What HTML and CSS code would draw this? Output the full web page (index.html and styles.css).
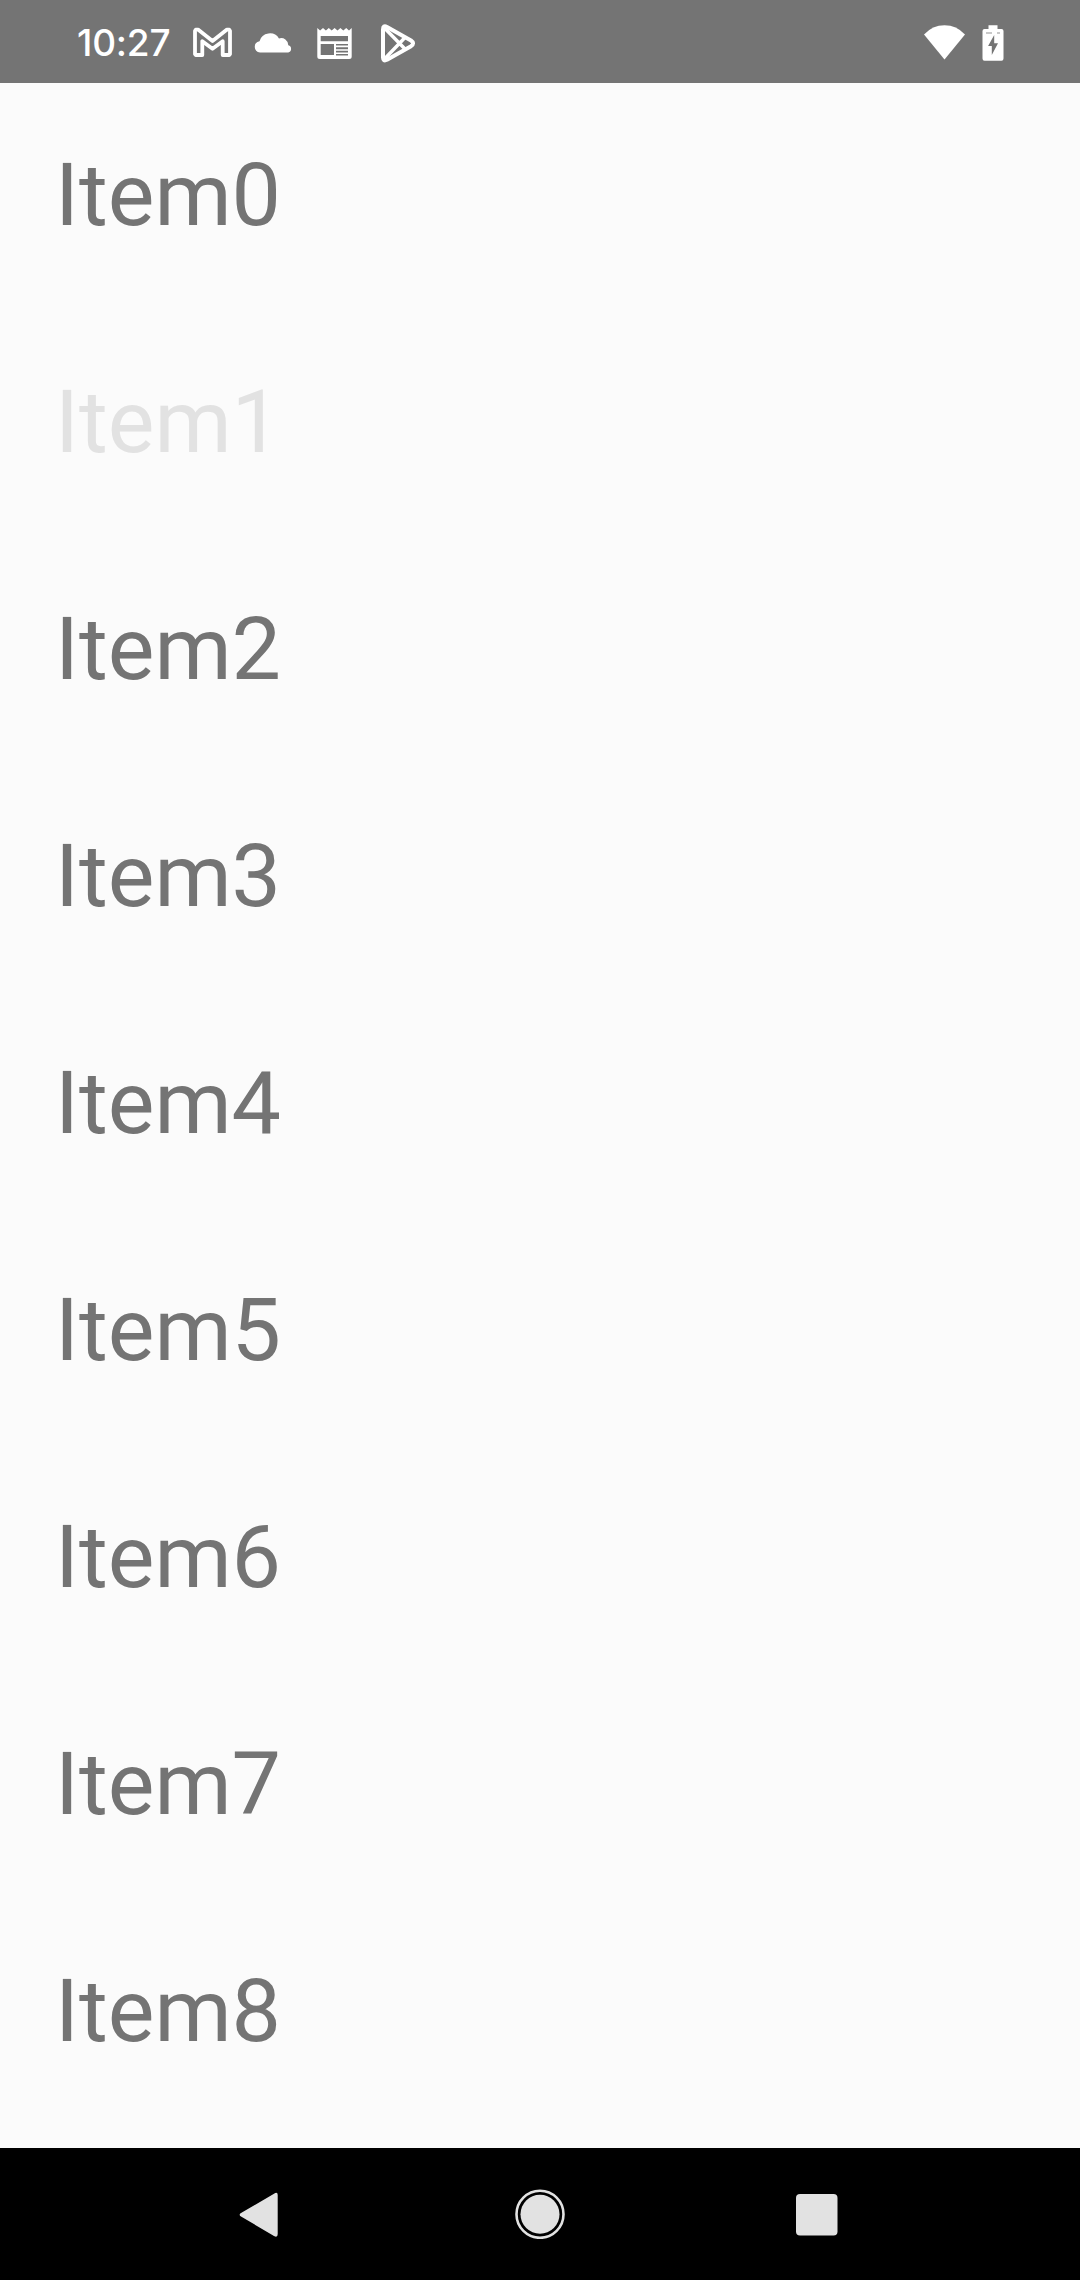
FILE: index.html
```html
<!DOCTYPE html>
<html lang="en">
<head>
  <meta charset="UTF-8">
  <title>Items</title>
  <link rel="stylesheet" href="styles.css">
</head>
<body>
  <header class="status-bar">
    <span class="clock">10:27</span>

    <div class="notifications">
      <!-- mail -->
      <svg width="42" height="83" viewBox="192 0 42 83">
        <path d="M195.8 29.6H198L212.5 41L227 29.6H229.2L230 31V54L229.2 55H222.700V41.200L212.5 48.800L202.300 41.200V55H195.800L195 54V31Z" fill="none" stroke="#fff" stroke-width="3.8" stroke-linejoin="round"/>
      </svg>
      <!-- cloud -->
      <svg width="40" height="83" viewBox="253 0 40 83">
        <path d="M260 52.5A5.7 5.7 0 0 1 259.5 41.2A10.8 10.8 0 0 1 279 38.4A7.2 7.2 0 0 1 288.3 45.3A3.7 3.7 0 0 1 288.2 52.5Z" fill="#fff"/>
      </svg>
      <!-- news -->
      <svg width="38" height="83" viewBox="316 0 38 83">
        <path fill-rule="evenodd" d="M317.3 28L320.1 30.6L323 28L325.9 30.6L328.8 28L331.7 30.6L334.6 28L337.5 30.6L340.4 28L343.3 30.6L346.2 28L349 30.6L351.7 28V56.5Q351.7 59 349.2 59H319.8Q317.3 59 317.3 56.5ZM320.7 36V41.3H348V36ZM320.7 44V55H334V44ZM336 44V45.5H348V44ZM336 47.3V49.3H348V47.3ZM336 50.8V52.4H348V50.8ZM336 54V55.5H348V54Z" fill="#fff"/>
      </svg>
      <!-- store -->
      <svg width="36" height="83" viewBox="380 0 36 83">
        <g fill="none" stroke="#fff" stroke-linejoin="round">
          <path d="M383 29.5Q383 24.8 387 26.9L411 40.5Q415.2 43.3 411 46.200L387 59.800Q383 61.700 383 57.5Z" stroke-width="4"/>
          <path d="M384 27.5L405.5 49.5M384 59.5L405.5 37" stroke-width="3.4"/>
        </g>
      </svg>
    </div>

    <div class="system-icons">
      <!-- wifi -->
      <svg width="42" height="83" viewBox="923 0 42 83">
        <path d="M924 34.5Q932.5 25.3 944.5 25.3Q956.5 25.3 965 34.5L944.5 59.5Z" fill="#fff"/>
      </svg>
      <!-- battery -->
      <svg width="22" height="83" viewBox="981.5 0 22 83">
        <path d="M988 25.3H997V29H1001Q1003 29 1003 31V58.5Q1003 60.7 1001 60.7H984Q982 60.7 982 58.5V31Q982 29 984 29H988Z" fill="#fff"/>
        <path d="M993.7 35L987.6 46H991.3V55L997.5 43.3H993.7Z" fill="#747474"/>
        <path d="M985.5 33H991.5M996.5 33H999.5" stroke="#949494" stroke-width="1.2"/>
      </svg>
    </div>
  </header>

  <main class="list">
    <div class="item">Item0</div>
    <div class="item pressed">Item1</div>
    <div class="item">Item2</div>
    <div class="item">Item3</div>
    <div class="item">Item4</div>
    <div class="item">Item5</div>
    <div class="item">Item6</div>
    <div class="item">Item7</div>
    <div class="item">Item8</div>
  </main>

  <nav class="nav-bar">
    <!-- back -->
    <svg width="50" height="50" viewBox="0 0 50 50">
      <path d="M8 24L41 4.7Q44.7 2.500 44.700 6V45Q44.700 49 41 47L8 27.500Q5.300 25.700 8 24Z" fill="#e2e2e2"/>
    </svg>
    <!-- home -->
    <svg width="50" height="50" viewBox="0 0 50 50">
      <circle cx="25" cy="25.3" r="23.5" fill="none" stroke="#e2e2e2" stroke-width="2.6"/>
      <circle cx="25" cy="25.3" r="19.5" fill="#e2e2e2"/>
    </svg>
    <!-- recents -->
    <svg width="50" height="50" viewBox="0 0 50 50">
      <rect x="4" y="5" width="41.5" height="41.5" rx="4" fill="#e2e2e2"/>
    </svg>
  </nav>
</body>
</html>
```
FILE: styles.css
```css
body {
  margin: 0;
  height: 2280px;
  display: flex;
  flex-direction: column;
  background-color: #fbfbfb;
  color: #747474;
  font-family: Roboto, sans-serif;
  overflow: hidden;
}
svg {
  display: block;
}
.status-bar {
  display: flex;
  height: 83px;
  padding: 0 76.5px 0 77px;
  background-color: #747474;
  color: #fff;
}
.clock {
  width: 115px;
  font-family: Inter, sans-serif;
  font-size: 37px;
  font-weight: 500;
  line-height: 85px;
  letter-spacing: -0.2px;
}
.notifications {
  display: flex;
}
.notifications svg {
  margin-right: 24px;
}
.notifications svg:first-child {
  margin-right: 19px;
}
.notifications svg:nth-child(2) {
  margin-right: 23px;
}
.notifications svg:nth-child(3) {
  margin-right: 26px;
}
.system-icons {
  display: flex;
  gap: 16.5px;
  margin-left: auto;
}
.list {
  flex: 1;
}
.item {
  height: 227px;
  padding-left: 55px;
  font-size: 88px;
  line-height: 223px;
}
.pressed {
  color: #e2e2e2;
}
.nav-bar {
  display: flex;
  justify-content: center;
  align-items: center;
  gap: 227px;
  height: 132px;
  padding-right: 1px;
  background-color: #000;
}
.nav-bar svg:first-child {
  margin-right: 5px;
  margin-left: -4px;
}
```
